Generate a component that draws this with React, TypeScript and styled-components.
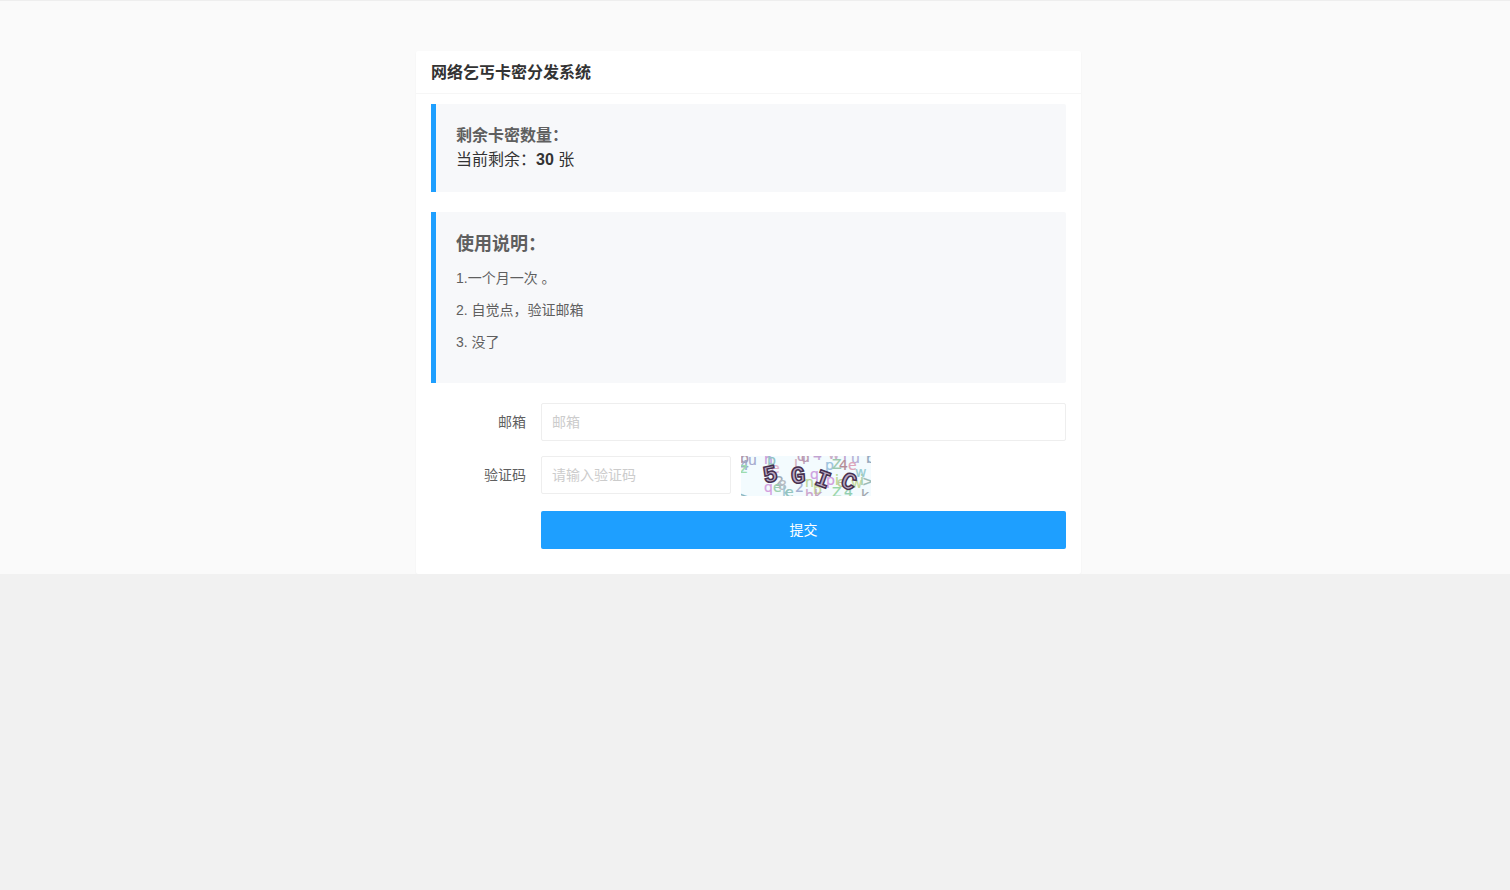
import React from "react";
import styled, { createGlobalStyle } from "styled-components";

const GlobalStyle = createGlobalStyle`
  * { box-sizing: border-box; }
  body {
    margin: 0;
    background: #f1f1f1;
    color: #333;
    font: 14px/22px "Liberation Sans", "Noto Sans CJK SC", sans-serif;
  }
  h1, h2, p { margin: 0; }
  input, button { font: inherit; }
`;

const Page = styled.main`
  display: flex;
  justify-content: center;
  padding: 50px 13px 0 0;
  border-top: 1px solid #eee;
  background: #fafafa;
`;

const Card = styled.section`
  width: 100%;
  max-width: 665px;
  background: #fff;
  border-radius: 2px;
  box-shadow: 0 1px 2px rgba(0, 0, 0, 0.05);
`;

const CardTitle = styled.h1`
  padding: 2px 15px 0;
  border-bottom: 1px solid #f6f6f6;
  font-size: 16px;
  line-height: 40px;
  font-weight: 700;
`;

const CardBody = styled.div`
  padding: 10px 15px 25px;
`;

const Quote = styled.div`
  margin-bottom: 20px;
  padding: 20px;
  border-left: 5px solid #1e9fff;
  border-radius: 0 2px 2px 0;
  background: #f7f8fa;
`;

const QuoteTitle = styled.h2<{ $large?: boolean }>`
  color: #5f5f5f;
  font-weight: 700;
  font-size: ${(p) => (p.$large ? "18px" : "16px")};
  line-height: ${(p) => (p.$large ? "25px" : "24px")};
  margin-bottom: ${(p) => (p.$large ? "10px" : "0")};
`;

const Remaining = styled.p`
  font-size: 16px;
  line-height: 24px;
`;

const Note = styled.p`
  margin-bottom: 10px;
  color: #5f5f5f;
`;

const Form = styled.form`
  display: flex;
  flex-direction: column;
  gap: 15px;
`;

const Row = styled.div`
  display: flex;
  align-items: flex-start;
`;

const Label = styled.label`
  flex: none;
  width: 110px;
  padding: 8px 15px;
  color: #5f5f5f;
  text-align: right;
`;

const Field = styled.div`
  flex: 1;
  min-width: 0;
  display: flex;
  gap: 10px;
`;

const SubmitField = styled(Field)`
  margin-left: 110px;
`;

const TextInput = styled.input<{ $short?: boolean }>`
  width: ${(p) => (p.$short ? "190px" : "100%")};
  height: 38px;
  padding: 0 10px;
  border: 1px solid #eee;
  border-radius: 2px;
  background: #fff;
  color: #333;
  outline: none;
  &::placeholder { color: #ccc; opacity: 1; }
  &:focus { border-color: #d2d2d2; }
`;

const SubmitButton = styled.button`
  width: 100%;
  height: 38px;
  border: 0;
  border-radius: 2px;
  background: #1e9fff;
  color: #fff;
  cursor: pointer;
`;

const CaptchaImage = styled.svg`
  flex: none;
  display: block;
  cursor: pointer;
`;

type Glyph = [char: string, x: number, y: number, color: string];

const noise: Glyph[] = [
  ["b", -1, 7, "#ac94a8"], ["4", -1, 14, "#9caac8"], ["z", -1, 17, "#9ddcae"],
  ["u", 7, 9, "#a5aacf"], [">", -2, 46, "#8bb5bd"], ["h", 23, 8, "#c99ddb"],
  ["b", 26, 9, "#8fc4c5"], ["e", 30, 17, "#e5b2cb"], ["q", 23, 36, "#d3a0df"],
  ["2", 34, 30, "#9cabb8"], ["e", 32, 36, "#9bcfad"], ["8", 37, 34, "#b5bac1"],
  ["k", 41, 41, "#9cc6d6"], ["e", 44, 41, "#94c5bd"], ["2", 54, 36, "#a4afd2"],
  ["l", 53, 14, "#d1b0bc"], ["q", 56, 5, "#bf9dbb"], ["d", 60, 6, "#ba98b0"],
  ["4", 72, 4, "#c2a3d2"], ["w", 87, 3, "#c9adc7"],
  ["r", 102, 4, "#bb9acb"], ["u", 110, 7, "#b3add5"], ["b", 125, 7, "#93a7bd"],
  ["p", 84, 14, "#9dc3df"], ["Z", 91, 13, "#9ac8ae"], ["4", 98, 14, "#b48b95"],
  ["e", 107, 14, "#dda4b9"], ["q", 69, 23, "#cd9fe0"], ["n", 64, 31, "#bdd89b"],
  ["b", 72, 38, "#c6d99c"], ["p", 85, 29, "#d29ddd"], ["i", 94, 29, "#b6d68d"],
  ["e", 96, 31, "#bdcc9a"], ["w", 114, 21, "#97cbd3"], ["w", 110, 32, "#c4da9b"],
  ["i", 119, 29, "#a2cca7"], [">", 121, 30, "#99b9b4"], ["h", 64, 44, "#cda3cc"],
  ["k", 73, 44, "#c4a2bc"], ["Z", 91, 41, "#97d5a6"], ["4", 103, 41, "#91cfb0"],
  ["k", 120, 44, "#9fa4ab"],
];

const code: { char: string; x: number; y: number; angle: number }[] = [
  { char: "5", x: 22, y: 26, angle: -12 },
  { char: "G", x: 50, y: 27, angle: -4 },
  { char: "I", x: 75, y: 31, angle: 20 },
  { char: "C", x: 101, y: 33, angle: 24 },
];

function Captcha() {
  return (
    <CaptchaImage width="130" height="40" viewBox="0 0 130 40" role="img" aria-label="验证码图片">
      <rect width="130" height="40" fill="#f3fbfe" />
      <g fontFamily="DejaVu Sans, sans-serif" fontSize="14" strokeWidth="0.2">
        {noise.map(([char, x, y, color], i) => (
          <text key={i} x={x} y={y} fill={color} stroke={color}>{char}</text>
        ))}
      </g>
      <g
        fontFamily="Liberation Mono, monospace"
        fontSize="24"
        fontWeight="700"
        fill="#b9a9c2"
        stroke="#46304f"
        strokeWidth="1.5"
      >
        {code.map(({ char, x, y, angle }, i) => (
          <text key={i} x={x} y={y} transform={`rotate(${angle} ${x + 7} ${y - 8})`}>{char}</text>
        ))}
      </g>
    </CaptchaImage>
  );
}

export default function App() {
  return (
    <>
      <GlobalStyle />
      <Page>
        <Card>
          <CardTitle>网络乞丐卡密分发系统</CardTitle>
          <CardBody>
            <Quote>
              <QuoteTitle>剩余卡密数量：</QuoteTitle>
              <Remaining>当前剩余：<strong>30</strong> 张</Remaining>
            </Quote>
            <Quote>
              <QuoteTitle $large>使用说明：</QuoteTitle>
              <Note>1.一个月一次 。</Note>
              <Note>2. 自觉点，验证邮箱</Note>
              <Note>3. 没了</Note>
            </Quote>
            <Form onSubmit={(e) => e.preventDefault()}>
              <Row>
                <Label htmlFor="email">邮箱</Label>
                <Field>
                  <TextInput id="email" type="email" placeholder="邮箱" />
                </Field>
              </Row>
              <Row>
                <Label htmlFor="captcha">验证码</Label>
                <Field>
                  <TextInput id="captcha" type="text" placeholder="请输入验证码" $short />
                  <Captcha />
                </Field>
              </Row>
              <Row>
                <SubmitField>
                  <SubmitButton type="submit">提交</SubmitButton>
                </SubmitField>
              </Row>
            </Form>
          </CardBody>
        </Card>
      </Page>
    </>
  );
}
